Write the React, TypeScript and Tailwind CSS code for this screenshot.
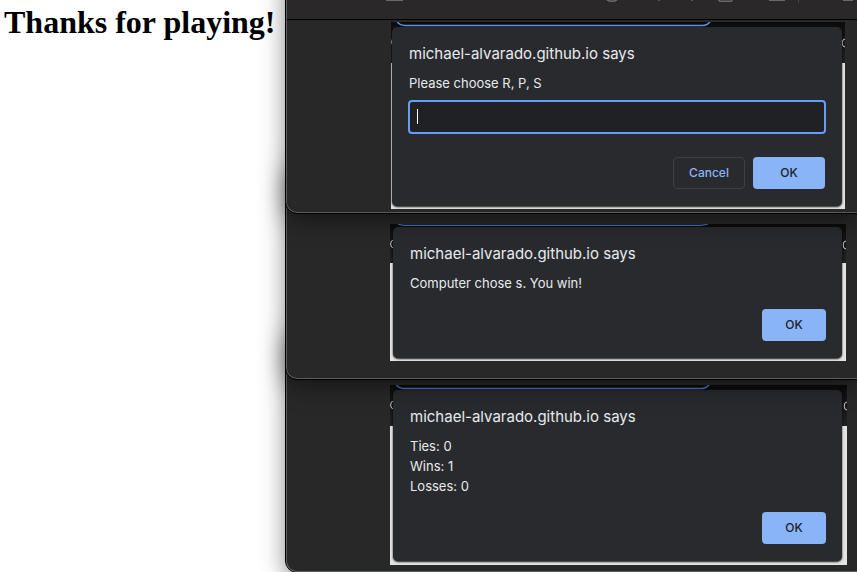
import type { ReactNode } from "react";

const shadow = "shadow-[0_6px_24px_rgba(0,0,0,0.5)]";

function BrowserWindow({ className, children }: { className: string; children: ReactNode }) {
  return (
    <section
      className={`relative rounded-bl-[11px] border-b border-l border-[#5c5e5e] bg-[#282828] outline outline-black ${shadow} ${className}`}
    >
      {children}
    </section>
  );
}

function TabOutline({ dim, shallow }: { dim?: boolean; shallow?: boolean }) {
  return (
    <svg
      className="absolute top-0 left-[6px]"
      width="314"
      height="5"
      fill="none"
      stroke={dim ? "#4676bd" : "#5b93e6"}
      strokeWidth={shallow ? 1.2 : 1.5}
      aria-hidden="true"
    >
      <path d={shallow ? "M2 0 Q5 1.4 9 1.4 H304 Q308 1.4 312 0" : "M0 0 Q3 3.4 7 3.4 H306 Q310 3.4 313 0"} />
    </svg>
  );
}

interface BackdropProps {
  className: string;
  dim?: boolean;
  shallow?: boolean;
  children: ReactNode;
}

function Backdrop({ className, dim, shallow, children }: BackdropProps) {
  return (
    <div className={`relative overflow-hidden ${className}`}>
      <TabOutline dim={dim} shallow={shallow} />
      <svg className="absolute top-[15px] left-0" width="4" height="10" fill="none" stroke="#c8c8c8" aria-hidden="true">
        <path d="M4 1 Q0.6 1 0.6 5 Q0.6 9 4 9" />
      </svg>
      <svg className="absolute top-[16px] right-0" width="4" height="10" fill="none" stroke="#c8c8c8" aria-hidden="true">
        <path d="M4 1 Q1.2 1 1.2 5 Q1.2 9 4 9" />
      </svg>
      <div className="relative rounded-[5px] bg-[#292a2d] px-4 py-[17px] text-[13px] leading-5 text-[#e8eaed] shadow-[0_1px_2px_rgba(0,0,0,0.9)]">
        {children}
      </div>
    </div>
  );
}

function DialogTitle() {
  return <h2 className="pl-px text-[15px] leading-5">michael-alvarado.github.io says</h2>;
}

function OkButton({ className }: { className: string }) {
  return (
    <button type="button" className={`h-8 rounded-[4px] bg-[#8ab4f8] text-[12px] font-medium text-[#202124] ${className}`}>
      OK
    </button>
  );
}

export default function App() {
  return (
    <main className="flex min-h-screen items-start overflow-hidden bg-white font-['Inter','Liberation_Sans',sans-serif]">
      <h1 className="w-[286px] shrink-0 pt-1 pl-1 font-['Liberation_Serif',serif] text-[32px] leading-9 font-bold whitespace-nowrap text-black">
        Thanks for playing!
      </h1>
      <div className="min-w-0 flex-1">
        <BrowserWindow className="z-30 -mt-10 pt-10 pb-[3px]">
          <div className="h-5 border-b border-black bg-[#2a2829]">
            <svg width="570" height="4" fill="none" stroke="#6b696a" strokeWidth="1.5" aria-hidden="true">
              <path d="M99 0.3H116 M320 0 Q325 2.5 330 0 M372 0V1 M405 0V1 M432 0 Q432 1.3 434 1.3 H443 Q445 1.3 445 0 M482 0.3H498 M556 0.3H566" />
              <path d="M511.5 0V3" stroke="#444" strokeWidth="1" />
            </svg>
          </div>
          <div className="pt-[2px] pr-3 pl-[104px]">
            <Backdrop className="bg-[linear-gradient(#0b0b0c_0,#202124_41px,#e3e3e3_41px)] pt-[5px] pr-[3px] pb-[3px] pl-px">
              <DialogTitle />
              <form onSubmit={(event) => event.preventDefault()}>
                <label htmlFor="choice" className="mt-[9px] block pl-px">
                  Please choose R, P, S
                </label>
                <div className="relative mt-[7px]">
                  <input
                    id="choice"
                    type="text"
                    className="block h-[34px] w-full rounded-[4px] border-2 border-[#669df6] bg-[#202124] px-2 caret-transparent outline-none"
                  />
                  <span className="absolute top-[9px] left-[9px] h-[15px] w-px bg-white" aria-hidden="true" />
                </div>
                <div className="mt-[23px] flex justify-end gap-2 pr-px">
                  <button
                    type="button"
                    className="h-8 w-[72px] rounded-[4px] border border-[#3c4043] text-[12px] font-medium text-[#8ab4f8]"
                  >
                    Cancel
                  </button>
                  <OkButton className="w-[72px]" />
                </div>
              </form>
            </Backdrop>
          </div>
        </BrowserWindow>

        <BrowserWindow className="z-20 -mt-[50px] pt-[61px] pr-[11px] pb-[17px] pl-[103px]">
          <Backdrop
            dim
            shallow
            className="bg-[linear-gradient(#0b0b0c_0,#202124_39px,#e3e3e3_39px)] pt-[3px] pr-[4px] pb-[3px] pl-[3px]"
          >
            <DialogTitle />
            <p className="mt-[9px] pl-px">Computer chose s. You win!</p>
            <div className="mt-4 flex justify-end">
              <OkButton className="w-16" />
            </div>
          </Backdrop>
        </BrowserWindow>

        <BrowserWindow className="z-10 -mt-[50px] pt-[56px] pr-[10px] pb-[6px] pl-[103px]">
          <Backdrop
            dim
            className="bg-[linear-gradient(#0b0b0c_0,#202124_41px,#e3e3e3_41px)] pt-[5px] pr-[5px] pb-[4px] pl-[3px]"
          >
            <DialogTitle />
            <p className="mt-[9px] pl-px">
              Ties: 0<br />
              Wins: 1<br />
              Losses: 0
            </p>
            <div className="mt-4 flex justify-end">
              <OkButton className="w-16" />
            </div>
          </Backdrop>
        </BrowserWindow>
      </div>
    </main>
  );
}
